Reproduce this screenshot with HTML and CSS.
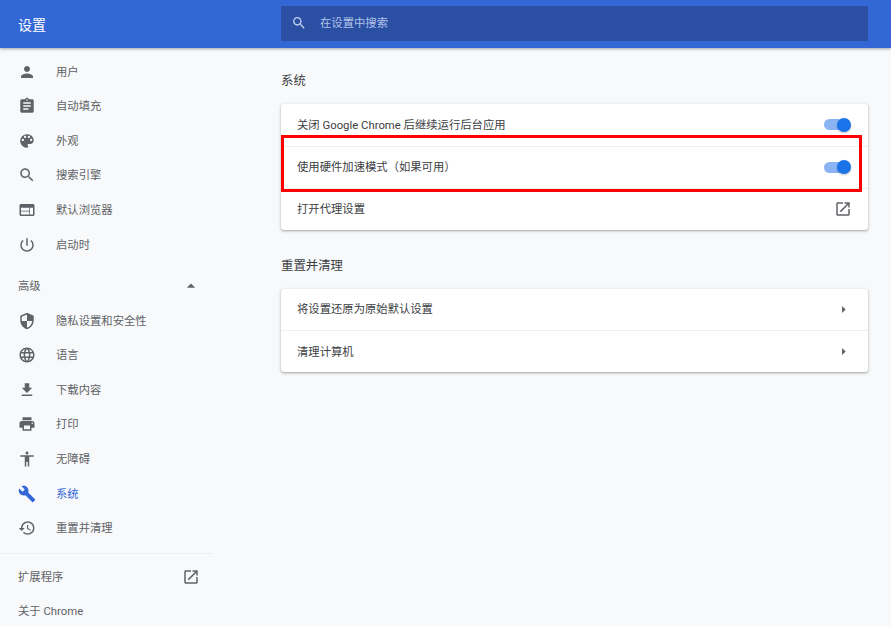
FILE: index.html
```html
<!DOCTYPE html>
<html lang="zh-CN">

<head>
    <meta charset="UTF-8">
    <meta name="viewport" content="width=device-width, initial-scale=1.0">
    <title>设置</title>
    <link rel="stylesheet" href="styles.css">
</head>

<body>
    <svg class="sprite" xmlns="http://www.w3.org/2000/svg">
        <symbol id="i-person" viewBox="0 0 24 24"><path d="M12 12c2.21 0 4-1.79 4-4s-1.79-4-4-4-4 1.79-4 4 1.79 4 4 4zm0 2c-2.67 0-8 1.34-8 4v2h16v-2c0-2.66-5.33-4-8-4z"/></symbol>
        <symbol id="i-assignment" viewBox="0 0 24 24"><path d="M19 3h-4.18C14.4 1.84 13.3 1 12 1c-1.3 0-2.4.84-2.82 2H5c-1.1 0-2 .9-2 2v14c0 1.1.9 2 2 2h14c1.1 0 2-.9 2-2V5c0-1.1-.9-2-2-2zm-7 0c.55 0 1 .45 1 1s-.45 1-1 1-1-.45-1-1 .45-1 1-1zm2 14H7v-2h7v2zm3-4H7v-2h10v2zm0-4H7V7h10v2z"/></symbol>
        <symbol id="i-palette" viewBox="0 0 24 24"><path d="M12 3c-4.97 0-9 4.03-9 9s4.03 9 9 9c.83 0 1.5-.67 1.5-1.5 0-.39-.15-.74-.39-1.01-.23-.26-.38-.61-.38-.99 0-.83.67-1.5 1.5-1.5H16c2.76 0 5-2.24 5-5 0-4.42-4.03-8-9-8zm-5.5 9c-.83 0-1.5-.67-1.5-1.5S5.67 9 6.5 9 8 9.67 8 10.5 7.33 12 6.5 12zm3-4C8.67 8 8 7.33 8 6.5S8.67 5 9.5 5s1.5.67 1.5 1.5S10.33 8 9.5 8zm5 0c-.83 0-1.5-.67-1.5-1.5S13.67 5 14.5 5s1.5.67 1.5 1.5S15.33 8 14.5 8zm3 4c-.83 0-1.5-.67-1.5-1.5S16.67 9 17.5 9s1.5.67 1.5 1.5-.67 1.5-1.5 1.5z"/></symbol>
        <symbol id="i-search" viewBox="0 0 24 24"><path d="M15.5 14h-.79l-.28-.27C15.41 12.59 16 11.11 16 9.5 16 5.91 13.09 3 9.5 3S3 5.91 3 9.5 5.91 16 9.5 16c1.61 0 3.09-.59 4.23-1.57l.27.28v.79l5 4.99L20.49 19l-4.99-5zm-6 0C7.01 14 5 11.99 5 9.5S7.01 5 9.5 5 14 7.01 14 9.5 11.99 14 9.5 14z"/></symbol>
        <symbol id="i-web" viewBox="0 0 24 24"><path d="M20 4H4c-1.1 0-1.99.9-1.99 2L2 18c0 1.1.9 2 2 2h16c1.1 0 2-.9 2-2V6c0-1.1-.9-2-2-2zm-5 14H4v-4h11v4zm0-5H4V9h11v4zm5 5h-4V9h4v9z"/></symbol>
        <symbol id="i-power" viewBox="0 0 24 24"><path d="M13 3h-2v10h2V3zm4.83 2.17l-1.42 1.42C17.99 7.86 19 9.81 19 12c0 3.87-3.13 7-7 7s-7-3.13-7-7c0-2.19 1.01-4.14 2.58-5.42L6.17 5.17C4.23 6.82 3 9.26 3 12c0 4.97 4.03 9 9 9s9-4.03 9-9c0-2.74-1.23-5.18-3.17-6.83z"/></symbol>
        <symbol id="i-security" viewBox="0 0 24 24"><path d="M12 1L3 5v6c0 5.55 3.84 10.74 9 12 5.16-1.26 9-6.45 9-12V5l-9-4zm0 10.99h7c-.53 4.12-3.28 7.79-7 8.94V12H5V6.3l7-3.11v8.8z"/></symbol>
        <symbol id="i-language" viewBox="0 0 24 24"><path d="M11.99 2C6.47 2 2 6.48 2 12s4.47 10 9.99 10C17.52 22 22 17.52 22 12S17.52 2 11.99 2zm6.93 6h-2.95c-.32-1.25-.78-2.45-1.38-3.56 1.84.63 3.37 1.91 4.33 3.56zM12 4.04c.83 1.2 1.48 2.53 1.91 3.96h-3.82c.43-1.43 1.08-2.76 1.91-3.96zM4.26 14C4.1 13.36 4 12.69 4 12s.1-1.36.26-2h3.38c-.08.66-.14 1.32-.14 2 0 .68.06 1.34.14 2H4.26zm.82 2h2.95c.32 1.25.78 2.45 1.38 3.56-1.84-.63-3.37-1.9-4.33-3.56zm2.95-8H5.08c.96-1.66 2.49-2.93 4.33-3.56C8.81 5.55 8.35 6.75 8.03 8zM12 19.96c-.83-1.2-1.48-2.53-1.91-3.96h3.82c-.43 1.43-1.08 2.76-1.91 3.96zM14.34 14H9.66c-.09-.66-.16-1.32-.16-2 0-.68.07-1.35.16-2h4.68c.09.65.16 1.32.16 2 0 .68-.07 1.34-.16 2zm.25 5.56c.6-1.11 1.06-2.31 1.38-3.56h2.95c-.96 1.65-2.49 2.93-4.33 3.56zM16.36 14c.08-.66.14-1.32.14-2 0-.68-.06-1.34-.14-2h3.38c.16.64.26 1.31.26 2s-.1 1.36-.26 2h-3.38z"/></symbol>
        <symbol id="i-download" viewBox="0 0 24 24"><path d="M19 9h-4V3H9v6H5l7 7 7-7zM5 18v2h14v-2H5z"/></symbol>
        <symbol id="i-print" viewBox="0 0 24 24"><path d="M19 8H5c-1.66 0-3 1.34-3 3v6h4v4h12v-4h4v-6c0-1.66-1.34-3-3-3zm-3 11H8v-5h8v5zm3-7c-.55 0-1-.45-1-1s.45-1 1-1 1 .45 1 1-.45 1-1 1zm-1-9H6v4h12V3z"/></symbol>
        <symbol id="i-access" viewBox="0 0 24 24"><path d="M12 2c1.1 0 2 .9 2 2s-.9 2-2 2-2-.9-2-2 .9-2 2-2zm9 7h-6v13h-2v-6h-2v6H9V9H3V7h18v2z"/></symbol>
        <symbol id="i-build" viewBox="0 0 24 24"><path d="M22.7 19l-9.1-9.1c.9-2.3.4-5-1.5-6.9-2-2-5-2.4-7.4-1.3L9 6 6 9 1.6 4.7C.4 7.1.9 10.1 2.9 12.1c1.9 1.9 4.6 2.4 6.9 1.5l9.1 9.1c.4.4 1 .4 1.4 0l2.3-2.3c.5-.4.5-1.1.1-1.4z"/></symbol>
        <symbol id="i-restore" viewBox="0 0 24 24"><path d="M13 3c-4.97 0-9 4.03-9 9H1l3.89 3.89.07.14L9 12H6c0-3.87 3.13-7 7-7s7 3.13 7 7-3.13 7-7 7c-1.93 0-3.68-.79-4.94-2.06l-1.42 1.42C8.27 19.99 10.51 21 13 21c4.97 0 9-4.03 9-9s-4.03-9-9-9zm-1 5v5l4.28 2.54.72-1.21-3.5-2.08V8H12z"/></symbol>
        <symbol id="i-open" viewBox="0 0 24 24"><path d="M19 19H5V5h7V3H5c-1.11 0-2 .9-2 2v14c0 1.1.89 2 2 2h14c1.1 0 2-.9 2-2v-7h-2v7zM14 3v2h3.59l-9.83 9.83 1.41 1.41L19 6.41V10h2V3h-7z"/></symbol>
        <symbol id="i-right" viewBox="0 0 24 24"><path d="M10 17l5-5-5-5v10z"/></symbol>
        <symbol id="i-up" viewBox="0 0 24 24"><path d="M7 14l5-5 5 5z"/></symbol>
    </svg>

    <header class="top">
        <h1 class="top-title">设置</h1>
        <div class="search">
            <svg class="search-icon"><use href="#i-search"/></svg>
            <span>在设置中搜索</span>
        </div>
    </header>

    <div class="page">
        <nav class="side">
            <a class="side-item"><svg class="icon"><use href="#i-person"/></svg>用户</a>
            <a class="side-item"><svg class="icon"><use href="#i-assignment"/></svg>自动填充</a>
            <a class="side-item"><svg class="icon"><use href="#i-palette"/></svg>外观</a>
            <a class="side-item"><svg class="icon"><use href="#i-search"/></svg>搜索引擎</a>
            <a class="side-item"><svg class="icon"><use href="#i-web"/></svg>默认浏览器</a>
            <a class="side-item"><svg class="icon"><use href="#i-power"/></svg>启动时</a>

            <div class="side-group">高级<svg class="caret"><use href="#i-up"/></svg></div>

            <a class="side-item"><svg class="icon"><use href="#i-security"/></svg>隐私设置和安全性</a>
            <a class="side-item"><svg class="icon"><use href="#i-language"/></svg>语言</a>
            <a class="side-item"><svg class="icon"><use href="#i-download"/></svg>下载内容</a>
            <a class="side-item"><svg class="icon"><use href="#i-print"/></svg>打印</a>
            <a class="side-item"><svg class="icon"><use href="#i-access"/></svg>无障碍</a>
            <a class="side-item active"><svg class="icon"><use href="#i-build"/></svg>系统</a>
            <a class="side-item"><svg class="icon"><use href="#i-restore"/></svg>重置并清理</a>

            <hr class="side-line">

            <a class="side-link">扩展程序<svg class="icon"><use href="#i-open"/></svg></a>
            <a class="side-link">关于 Chrome</a>
        </nav>

        <main class="main">
            <h2 class="section-title">系统</h2>
            <section class="card">
                <div class="row">关闭 Google Chrome 后继续运行后台应用<span class="toggle"></span></div>
                <div class="row">使用硬件加速模式（如果可用）<span class="toggle"></span></div>
                <div class="row">打开代理设置<svg class="row-open"><use href="#i-open"/></svg></div>
                <div class="mark"></div>
            </section>

            <h2 class="section-title">重置并清理</h2>
            <section class="card">
                <div class="row">将设置还原为原始默认设置<svg class="row-arrow"><use href="#i-right"/></svg></div>
                <div class="row">清理计算机<svg class="row-arrow"><use href="#i-right"/></svg></div>
            </section>
        </main>
    </div>
</body>

</html>
```

FILE: styles.css
```css
* {
    margin: 0;
    padding: 0;
    box-sizing: border-box;
}

html,
body {
    height: 100%;
    overflow: hidden;
}

body {
    background: #f8f9fa;
    color: #3c4043;
    font-family: Roboto, "Noto Sans CJK SC", sans-serif;
    font-size: 11.33px;
    line-height: 16px;
}

.sprite {
    display: none;
}

/* 頂部藍色列 */
.top {
    display: flex;
    align-items: center;
    height: 48px;
    background: #3367d6;
    box-shadow: 0 1px 3px rgba(0, 0, 0, .35);
    position: relative;
}

.top-title {
    width: 281px;
    padding: 1px 0 0 18px;
    color: #fff;
    font-size: 14px;
    font-weight: 400;
}

.search {
    display: flex;
    align-items: center;
    width: 587px;
    height: 35px;
    margin-top: -1px;
    padding: 0 0 2px 10px;
    border-radius: 1px;
    background: #2a4fa3;
    color: #b3c3ea;
}

.search-icon {
    width: 16px;
    height: 16px;
    margin-right: 13px;
    fill: #c3d0f0;
}

.page {
    display: flex;
}

/* 左側選單 */
.side {
    width: 213px;
    padding-top: 6.4px;
    color: #5f6368;
}

.side-item {
    display: flex;
    align-items: center;
    height: 34.6px;
    padding-left: 18px;
}

.icon {
    flex: none;
    width: 18px;
    height: 18px;
    margin-right: 20px;
    fill: #5f6368;
}

.active {
    color: #3367d6;
}

.active .icon {
    fill: #3367d6;
}

.side-group {
    display: flex;
    align-items: center;
    justify-content: space-between;
    height: 41.4px;
    padding: 7px 12px 0 18px;
}

.caret {
    width: 20px;
    height: 20px;
    fill: #5f6368;
}

.side-line {
    height: 1px;
    margin: 7px 0;
    border: 0;
    background: #eceef0;
}

.side-link {
    display: flex;
    align-items: center;
    justify-content: space-between;
    height: 33.5px;
    padding-left: 18px;
}

.side-link .icon {
    margin-right: 13px;
}

/* 右側內容 */
.main {
    width: 587px;
    margin-left: 68px;
}

.section-title {
    height: 56px;
    padding-top: 24px;
    font-size: 12.4px;
    font-weight: 400;
    line-height: 18px;
    color: #3c4043;
}

.card {
    position: relative;
    margin-bottom: 3px;
    border-radius: 3px;
    background: #fff;
    box-shadow: 0 1px 2px rgba(60, 64, 67, .35), 0 1px 3px 1px rgba(60, 64, 67, .1);
}

.row {
    display: flex;
    align-items: center;
    justify-content: space-between;
    height: 42px;
    padding: 0 16px;
    border-top: 1px solid #eff0f1;
}

.row:first-child {
    height: 41.5px;
    border-top: 0;
}

.toggle {
    position: relative;
    width: 20px;
    height: 11px;
    margin-right: 8px;
    border-radius: 6px;
    background: #8ab4f3;
}

.toggle::after {
    content: "";
    position: absolute;
    top: -1.5px;
    right: -7px;
    width: 14px;
    height: 14px;
    border-radius: 50%;
    background: #1a73e8;
    box-shadow: 0 1px 2px rgba(0, 0, 0, .25);
}

.row-open {
    width: 18px;
    height: 18px;
    fill: #5f6368;
}

.row-arrow {
    width: 17px;
    height: 17px;
    fill: #5f6368;
}

/* 紅框標註 */
.mark {
    position: absolute;
    top: 31px;
    left: 0;
    width: 581px;
    height: 57px;
    border: 3px solid #f00;
}
```
